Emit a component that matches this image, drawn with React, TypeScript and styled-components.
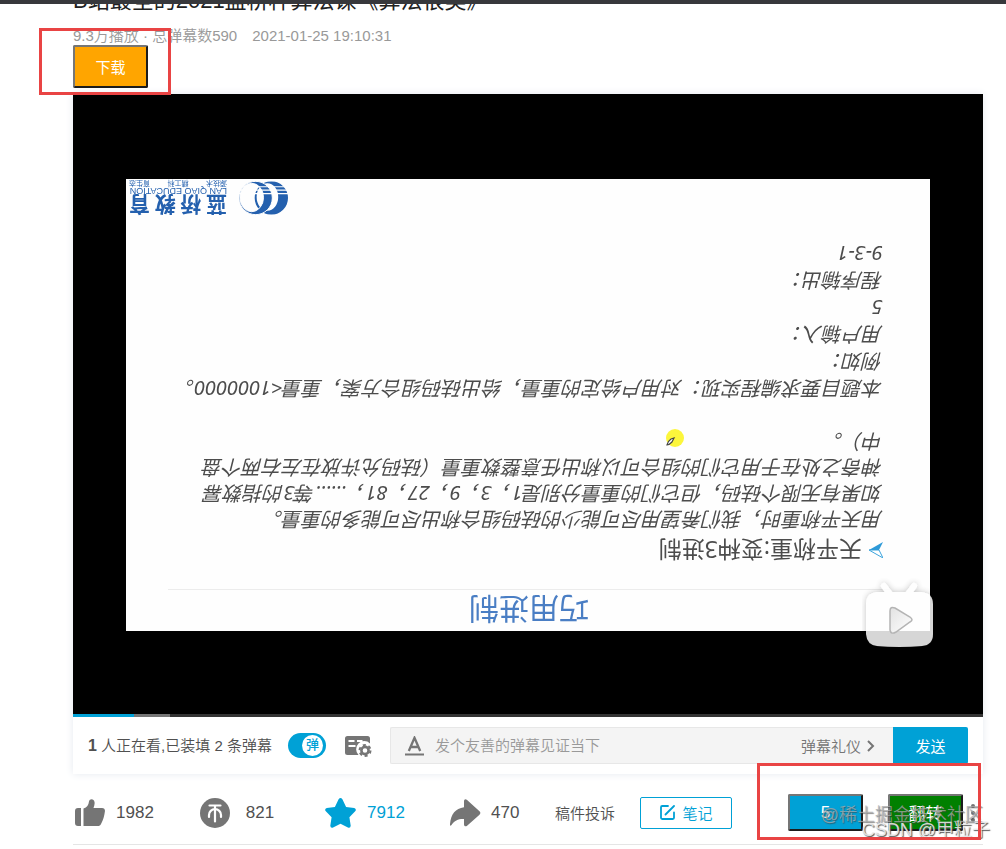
import React from "react";
import styled, { createGlobalStyle } from "styled-components";

const BLUE = "#00a1d6";
const GREY = "#757575";

const GlobalStyle = createGlobalStyle`
  * { box-sizing: border-box; }
  body {
    margin: 0;
    background: #fff;
    color: #505050;
    font-family: "Liberation Sans", "Noto Sans CJK SC", sans-serif;
    font-size: 15px;
    font-weight: 350;
  }
  button, input { font: inherit; }
  h1, h2, h3, p, ul { margin: 0; padding: 0; font-weight: inherit; }
`;

const Page = styled.div`
  position: relative;
  overflow: hidden;
`;

const TopBar = styled.div`
  height: 4px;
  background: #37383c;
`;

const Main = styled.main`
  padding: 0 23px 0 73px;
`;

const TitleClip = styled.div`
  display: flex;
  align-items: flex-end;
  height: 12px;
  overflow: hidden;
`;

const Title = styled.h1`
  color: #212121;
  font-size: 22px;
  line-height: 30px;
  font-weight: 400;
  white-space: nowrap;
`;

const Meta = styled.p`
  display: flex;
  gap: 15px;
  margin-top: 11px;
  color: #999;
  line-height: 18px;
`;

const BevelButton = styled.button<{ $color: string; $tall?: boolean }>`
  width: 75px;
  height: ${(p) => (p.$tall ? 43 : 37)}px;
  padding: 0;
  border: 2px solid;
  border-color: #767676 #1c1c1c #1c1c1c #767676;
  border-radius: 2px;
  background: ${(p) => p.$color};
  color: #fff;
  font-size: ${(p) => (p.$tall ? 15 : 17)}px;
  font-weight: 400;
`;

const DownloadRow = styled.div`
  display: flex;
  margin-bottom: 6px;
`;

const Player = styled.section`
  box-shadow: 0 0 8px #e5e9ef;
`;

const Screen = styled.div`
  position: relative;
  padding: 85px 53px 83px;
  background: #000;
`;

const Slide = styled.article`
  position: relative;
  display: flex;
  flex-direction: column;
  height: 452px;
  overflow: hidden;
  background: #fefefe;
  color: #4c4c4c;
  font-family: "Noto Sans", "Noto Sans CJK SC", sans-serif;
  font-weight: 400;
  text-spacing-trim: space-all;
  transform: rotate(180deg);
`;

const SlideTitle = styled.h2`
  height: 42px;
  margin: 0 42px 0 40px;
  padding-top: 2px;
  border-bottom: 1px solid #ececec;
  color: #4a7ec4;
  font-size: 30px;
  line-height: 40px;
  text-align: center;
`;

const SlideBody = styled.div`
  flex: 1;
  padding: 21px 0 0 47px;
  white-space: nowrap;
`;

const SlideHeading = styled.h3`
  display: flex;
  align-items: center;
  gap: 7px;
  font-size: 23px;
  line-height: 36px;
`;

const Paragraph = styled.p<{ $pitch: number }>`
  margin-bottom: 26px;
  font-size: 20px;
  font-style: italic;
  line-height: ${(p) => p.$pitch}px;
`;

const Brand = styled.div`
  position: absolute;
  right: 3px;
  bottom: 0;
  display: flex;
  align-items: center;
  gap: 12px;
  color: #2460ae;
`;

const BrandText = styled.div`
  width: 98px;
`;

const BrandName = styled.div`
  display: flex;
  justify-content: space-between;
  font-family: "Noto Sans CJK SC", sans-serif;
  font-size: 21px;
  font-weight: 700;
  line-height: 22px;
`;

const BrandEnglish = styled.div`
  font: 400 9px/8px "Liberation Sans", sans-serif;
  white-space: nowrap;
`;

const BrandMotto = styled.div`
  display: flex;
  justify-content: space-between;
  font-size: 7px;
  line-height: 8px;
`;

const Pointer = styled.svg`
  position: absolute;
  left: 245px;
  top: 182px;
`;

const TvBadge = styled.svg`
  position: absolute;
  right: 45px;
  bottom: 62px;
`;

const Progress = styled.div`
  display: flex;
  height: 3px;
  background: #333;
`;

const Segment = styled.div<{ $share: number; $color: string }>`
  width: ${(p) => p.$share}%;
  background: ${(p) => p.$color};
`;

const SendBar = styled.form`
  display: flex;
  align-items: center;
  height: 57px;
  padding: 0 15px;
  background: #fff;
`;

const Watching = styled.p`
  padding-bottom: 2px;
  white-space: nowrap;
  b { font-weight: 700; font-size: 16px; }
`;

const Toggle = styled.label`
  display: flex;
  justify-content: flex-end;
  width: 38px;
  height: 25px;
  margin-left: 16px;
  padding: 2px 3px;
  border-radius: 13px;
  background: ${BLUE};
  color: ${BLUE};
  input { position: absolute; opacity: 0; }
`;

const Knob = styled.span`
  width: 21px;
  height: 21px;
  border-radius: 50%;
  background: #fff;
  font-size: 13px;
  font-weight: 500;
  line-height: 20px;
  text-align: center;
`;

const IconButton = styled.button`
  display: flex;
  margin: 0 18px 0 19px;
  padding: 0;
  border: 0;
  background: none;
`;

const InputBox = styled.div`
  display: flex;
  flex: 1;
  align-items: center;
  height: 37px;
  padding: 0 18px 0 14px;
  border: 1px solid #e7e7e7;
  border-right: 0;
  border-radius: 2px 0 0 2px;
  background: #f4f4f4;
`;

const CommentInput = styled.input`
  flex: 1;
  min-width: 0;
  margin-left: 11px;
  padding: 0;
  border: 0;
  outline: 0;
  background: none;
  &::placeholder { color: #999; opacity: 1; }
`;

const Etiquette = styled.a`
  display: flex;
  align-items: center;
  gap: 6px;
  color: ${GREY};
  text-decoration: none;
`;

const SendButton = styled.button`
  width: 75px;
  height: 37px;
  border: 0;
  border-radius: 0 2px 2px 0;
  background: ${BLUE};
  color: #fff;
  font-weight: 400;
`;

const ActionBar = styled.div`
  display: flex;
  align-items: center;
  height: 71px;
  padding: 7px 0 0 2px;
  border-bottom: 1px solid #e5e5e5;
`;

const Action = styled.button<{ $on?: boolean; $last?: boolean }>`
  display: flex;
  flex: 0 0 ${(p) => (p.$last ? 105 : 125)}px;
  align-items: center;
  gap: 10px;
  padding: 0;
  border: 0;
  background: none;
  color: ${(p) => (p.$on ? BLUE : "#505050")};
  font-size: 17px;
  span { min-width: ${(p) => (p.$last ? 0 : 40)}px; text-align: center; }
`;

const Complaint = styled.a`
  color: #505050;
  text-decoration: none;
  white-space: nowrap;
`;

const NoteButton = styled.button`
  display: flex;
  align-items: center;
  justify-content: center;
  gap: 8px;
  width: 92px;
  height: 32px;
  margin-left: 25px;
  padding: 0;
  border: 1px solid ${BLUE};
  border-radius: 2px;
  background: #fff;
  color: ${BLUE};
`;

const Extras = styled.div`
  display: flex;
  align-items: center;
  gap: 25px;
  margin-left: auto;
`;

const More = styled.button`
  display: flex;
  justify-content: center;
  width: 20px;
  padding: 0;
  border: 0;
  background: none;
`;

const Highlight = styled.div<{ $x: number; $y: number; $w: number; $h: number; $right?: boolean }>`
  position: absolute;
  top: ${(p) => p.$y}px;
  ${(p) => (p.$right ? "right" : "left")}: ${(p) => p.$x}px;
  width: ${(p) => p.$w}px;
  height: ${(p) => p.$h}px;
  border: 3px solid #e94444;
  pointer-events: none;
`;

const Watermark = styled.div<{ $right: number; $top: number; $color: string; $shade: string }>`
  position: absolute;
  top: ${(p) => p.$top}px;
  right: ${(p) => p.$right}px;
  color: ${(p) => p.$color};
  font-size: 18px;
  line-height: 24px;
  text-shadow: 1px 1px 1px ${(p) => p.$shade};
  white-space: nowrap;
  pointer-events: none;
`;

const Like = () => (
  <svg width="30" height="28" viewBox="0 0 30 28" fill={GREY} aria-hidden="true">
    <path d="M3 9h3v18H3q-3-.2-3-3V12q0-3 3-3ZM8.500 27V9.500c3.500-1 5-3.500 5.500-7 .5-3 5-3.100 5.500.5.4 2-.2 4-1 6H27q3.400.3 2.900 3.500c-.6 4.500-1.700 8.500-3.900 12.500-.7 1.400-1.700 2-3 2Z" />
  </svg>
);

const Coin = () => (
  <svg width="30" height="30" viewBox="0 0 30 30" aria-hidden="true">
    <circle cx="15" cy="15" r="15" fill={GREY} />
    <path d="M9.500 7.500h11M15 8v15.500M9 19v-2a6 5.800 0 0 1 12 0v2" fill="none" stroke="#fff" strokeWidth="2.200" strokeLinecap="round" />
  </svg>
);

const Star = () => (
  <svg width="31" height="30" viewBox="0 0 31 30" fill={BLUE} aria-hidden="true">
    <path d="M13.600 1.200q1.900-2.200 3.800 0l3.700 7.700 8.100 1.200q2.500.7 1.200 3l-6 6.200 1.300 8.500q-.2 2.800-2.800 1.800l-7.400-3.900-7.400 3.900q-2.600 1-2.800-1.800l1.300-8.500-6-6.200q-1.300-2.300 1.200-3l8.100-1.200Z" />
  </svg>
);

const Share = () => (
  <svg width="31" height="28" viewBox="0 0 31 28" fill={GREY} aria-hidden="true">
    <path d="M14 2q.3-2.700 2.800-1.300L29.500 12.300q1.700 1.700 0 3.400L16.800 27Q14.300 28.200 14 25.500V20C8.500 19.700 4.500 21.500 1.500 26 .3 27.500-.2 26.500 0 25 1 15 5.500 9.500 14 8.300Z" />
  </svg>
);

const DanmakuSettings = () => (
  <svg width="27" height="22" viewBox="0 0 27 22" aria-hidden="true">
    <path d="M2.500 1h20Q25 1 25 3.500V8.500a8 8 0 0 0-11.500 11.500H2.500Q0 20 0 17.500v-14Q0 1 2.500 1Z" fill={GREY} />
    <path d="M3.500 6h6M12 6h5.500M3.500 11h7" stroke="#fff" strokeWidth="2" />
    <circle cx="20" cy="15.500" r="3.600" fill="none" stroke={GREY} strokeWidth="2.600" />
    <circle cx="20" cy="15.500" r="5.500" fill="none" stroke={GREY} strokeWidth="2" strokeDasharray="3 2.760" />
  </svg>
);

const FontStyle = () => (
  <svg width="19" height="20" viewBox="0 0 19 20" fill="none" stroke={GREY} aria-hidden="true">
    <path d="M3.800 15 9.500 1.800 15.200 15M6 11h7" strokeWidth="2.300" />
    <path d="M0 18.500h19" strokeWidth="2" />
  </svg>
);

const Note = () => (
  <svg width="15" height="15" viewBox="0 0 15 15" fill="none" stroke={BLUE} strokeWidth="1.800" strokeLinecap="round" aria-hidden="true">
    <path d="M8 1H2.200Q1 1 1 2.200v10.600Q1 14 2.200 14h10.600q1.200 0 1.200-1.200V7.500M5.500 9.500 14 1" />
  </svg>
);

const Rings = () => (
  <svg width="49" height="34" viewBox="0 0 50 34" aria-hidden="true">
    <defs>
      <mask id="stripes">
        <rect width="50" height="34" fill="#fff" />
        <path d="M0 21.500h50M0 25h50M0 28.500h50" stroke="#000" strokeWidth="1.200" />
      </mask>
    </defs>
    <g fill="#2460ae" fillRule="evenodd" mask="url(#stripes)">
      <path d="M17 0a17 17 0 1 0 0 34 17 17 0 0 0 0-34Zm4 4a11 14 0 1 1 0 28 11 14 0 0 1 0-28Z" />
      <path d="M33 0a17 17 0 1 0 0 34 17 17 0 0 0 0-34Zm4 3a12 14.500 0 1 1 0 29 12 14.500 0 0 1 0-29Z" stroke="#fefefe" strokeWidth="1" />
    </g>
  </svg>
);

const Tv = () => (
  <TvBadge width="76" height="74" viewBox="0 0 76 74" aria-hidden="true">
    <defs>
      <linearGradient id="play" x1="0" y1="0" x2="1" y2="1">
        <stop offset="0" stopColor="#e2e2e2" />
        <stop offset="1" stopColor="#fff" />
      </linearGradient>
      <filter id="soft" x="-20%" y="-20%" width="140%" height="140%">
        <feDropShadow dx="0" dy="0" stdDeviation="3" floodOpacity="0.28" />
      </filter>
    </defs>
    <g filter="url(#soft)" opacity="0.84">
      <path d="m22 8 6 8M52 8l-6 8" stroke="#fff" strokeWidth="6" strokeLinecap="round" />
      <path d="M15 14h44q12 1 12 12v30q0 11-11 12-23 2-45 0Q5 67 4 56V26q0-11 11-12Z" fill="#fff" />
    </g>
    <path d="M28 33q0-5 5-3l15 9q4 3 0 5l-14 10q-5 3-6-2Z" fill="url(#play)" stroke="#b4b4b4" strokeWidth="1.500" />
  </TvBadge>
);

export default function App() {
  return (
    <Page>
      <GlobalStyle />
      <TopBar />
      <Main>
        <TitleClip>
          <Title>B站最全的2021蓝桥杯算法课《算法很美》</Title>
        </TitleClip>
        <Meta>
          <span>9.3万播放 · 总弹幕数590</span>
          <span>2021-01-25 19:10:31</span>
        </Meta>
        <DownloadRow>
          <BevelButton $color="#ffa500" $tall>下载</BevelButton>
        </DownloadRow>

        <Player>
          <Screen>
            <Slide>
              <SlideTitle>巧用进制</SlideTitle>
              <SlideBody>
                <SlideHeading>
                  <svg width="14" height="16" viewBox="0 0 14 16" aria-hidden="true">
                    <path d="M0 0 14 8H4Z" fill="#fff" stroke="#3ba3dc" />
                    <path d="M0 16 14 8H4Z" fill="#2e9ad8" />
                  </svg>
                  天平称重:变种3进制
                </SlideHeading>
                <Paragraph $pitch={26}>
                  用天平称重时，我们希望用尽可能少的砝码组合称出尽可能多的重量。<br />
                  如果有无限个砝码，但它们的重量分别是1，3，9，27，81，……等3的指数幂<br />
                  神奇之处在于用它们的组合可以称出任意整数重量（砝码允许放在左右两个盘<br />
                  中）。
                </Paragraph>
                <Paragraph $pitch={27}>
                  本题目要求编程实现：对用户给定的重量，给出砝码组合方案，重量&lt;1000000。<br />
                  例如：<br />
                  用户输入：<br />
                  5<br />
                  程序输出：<br />
                  9-3-1
                </Paragraph>
              </SlideBody>
              <Brand>
                <Rings />
                <BrandText>
                  <BrandName><span>蓝</span><span>桥</span><span>教</span><span>育</span></BrandName>
                  <BrandEnglish>LAN QIAO EDUCATION</BrandEnglish>
                  <BrandMotto><span>源技术</span><span>精工科</span><span>育生态</span></BrandMotto>
                </BrandText>
              </Brand>
              <Pointer width="20" height="20" viewBox="0 0 20 20" aria-hidden="true">
                <circle cx="10" cy="11" r="9" fill="#fcf63c" />
                <path d="m11 11 2-4q3-3 5-3-1 4-4 6Z" fill="#fff" stroke="#444" strokeWidth="1.200" />
              </Pointer>
            </Slide>
            <Tv />
          </Screen>
          <Progress>
            <Segment $share={6.7} $color={BLUE} />
            <Segment $share={4} $color="#757575" />
          </Progress>
          <SendBar>
            <Watching><b>1</b> 人正在看,已装填 2 条弹幕</Watching>
            <Toggle>
              <input type="checkbox" defaultChecked />
              <Knob>弹</Knob>
            </Toggle>
            <IconButton type="button" aria-label="弹幕设置"><DanmakuSettings /></IconButton>
            <InputBox>
              <FontStyle />
              <CommentInput aria-label="弹幕" placeholder="发个友善的弹幕见证当下" />
              <Etiquette href="#">
                弹幕礼仪
                <svg width="8" height="12" viewBox="0 0 8 12" fill="none" stroke={GREY} strokeWidth="2" aria-hidden="true">
                  <path d="m1 1 5 5-5 5" />
                </svg>
              </Etiquette>
            </InputBox>
            <SendButton type="button">发送</SendButton>
          </SendBar>
        </Player>

        <ActionBar>
          <Action><Like /><span>1982</span></Action>
          <Action><Coin /><span>821</span></Action>
          <Action $on><Star /><span>7912</span></Action>
          <Action $last><Share /><span>470</span></Action>
          <Complaint href="#">稿件投诉</Complaint>
          <NoteButton><Note />笔记</NoteButton>
          <Extras>
            <BevelButton $color={BLUE}>5</BevelButton>
            <BevelButton $color="#008000">翻转</BevelButton>
          </Extras>
          <More aria-label="更多">
            <svg width="4" height="20" viewBox="0 0 4 20" fill={GREY} aria-hidden="true">
              <circle cx="2" cy="3" r="2" /><circle cx="2" cy="10" r="2" /><circle cx="2" cy="17" r="2" />
            </svg>
          </More>
        </ActionBar>
      </Main>

      <Watermark $right={23} $top={803} $color="rgba(170,170,170,.75)" $shade="rgba(60,60,60,.6)">@稀土掘金技术社区</Watermark>
      <Watermark $right={16} $top={818} $color="rgba(235,235,235,.9)" $shade="#555">CSDN @甲粒子</Watermark>
      <Highlight $x={39} $y={28} $w={132} $h={67} />
      <Highlight $right $x={25} $y={763} $w={224} $h={77} />
    </Page>
  );
}
